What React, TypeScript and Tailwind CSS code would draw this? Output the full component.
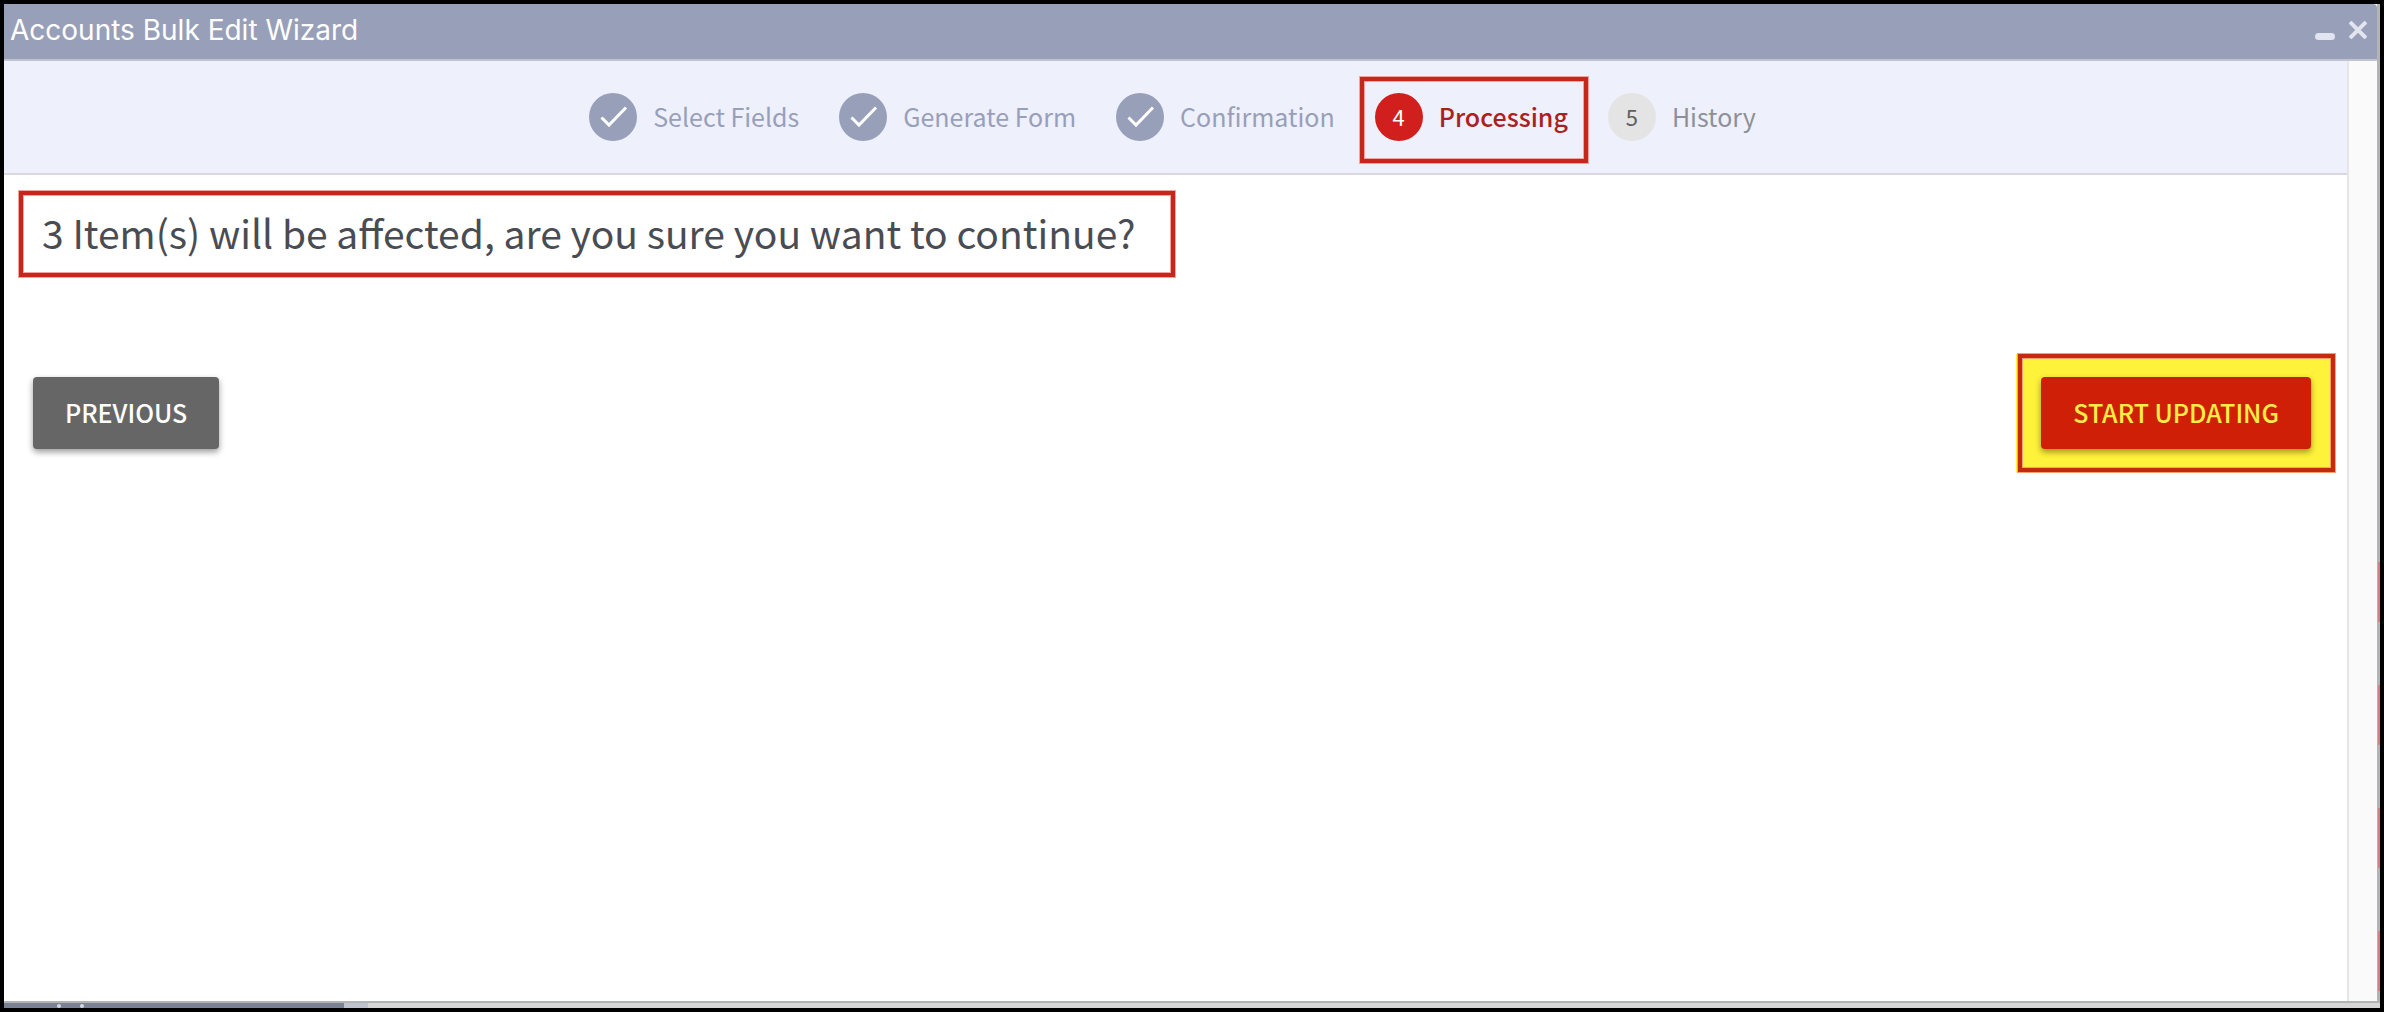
const steps = [
  { label: "Select Fields", state: "done" },
  { label: "Generate Form", state: "done" },
  { label: "Confirmation", state: "done" },
  { label: "Processing", state: "current" },
  { label: "History", state: "todo" },
];

const labelStyle: Record<string, string> = {
  done: "text-[#989fb9]",
  current: "font-medium text-[#ab1f22]",
  todo: "text-[#8e9099]",
};

const circleStyle: Record<string, string> = {
  done: "bg-[#989fb9] text-white",
  current: "bg-[#d01f1c] text-white",
  todo: "bg-[#e4e4e4] text-[#5f5f5f]",
};

function Check() {
  return (
    <svg viewBox="0 0 48 48" className="size-12" fill="none" stroke="white" strokeWidth="3" aria-label="Completed">
      <path d="M12.5 25.5l7.5 7.5L37 15.5" />
    </svg>
  );
}

function Highlight({ className }: { className: string }) {
  return (
    <span
      aria-hidden="true"
      className={`pointer-events-none absolute border-4 border-[#c5271c] shadow-[inset_0_0_0_1px_#f3a39c] outline outline-[#f3a39c] ${className}`}
    />
  );
}

function TitleBar() {
  return (
    <header className="flex h-[57px] items-center justify-between rounded-tr border-b-2 border-[#c0c4d1] bg-[#989fb9] pl-[6px] pr-[10px] pb-1">
      <h1 className="font-[Inter,sans-serif] text-[28px] leading-[50px] text-white">Accounts Bulk Edit Wizard</h1>
      <div className="flex items-center gap-[14px] text-[#e2e4f0]">
        <button aria-label="Minimize" className="flex h-5 w-5 items-end">
          <span className="h-[7px] w-5 rounded-full bg-current" />
        </button>
        <button aria-label="Close" className="size-[18px]">
          <svg viewBox="0 0 18 18" className="size-[18px]" stroke="currentColor" strokeWidth="4">
            <path d="M1 1l16 16M17 1L1 17" />
          </svg>
        </button>
      </div>
    </header>
  );
}

function Stepper() {
  return (
    <ol className="flex h-[114px] items-center justify-center gap-10 border-b-2 border-[#d7d8e1] bg-[#eef0fc] pr-[6px]">
      {steps.map((step, i) => (
        <li
          key={step.label}
          aria-current={step.state === "current" ? "step" : undefined}
          className="relative flex items-center gap-4 text-[25px] leading-8"
        >
          <span className={`flex size-12 shrink-0 items-center justify-center rounded-full pb-[2px] text-[22px] leading-6 ${circleStyle[step.state]}`}>
            {step.state === "done" ? <Check /> : <span>{i + 1}</span>}
          </span>
          <span className={`pb-[2px] ${labelStyle[step.state]}`}>{step.label}</span>
          {step.state === "current" && <Highlight className="-top-4 -bottom-[22px] -left-[15px] -right-[20px]" />}
        </li>
      ))}
    </ol>
  );
}

export default function App() {
  return (
    <div className="flex min-h-screen flex-col border-4 border-black bg-[#b4b8b8] font-['Noto_Sans_CJK_SC',sans-serif]">
      <div className="flex flex-1">
        <section className="flex min-w-0 flex-1 flex-col bg-white">
          <TitleBar />
          <div className="flex flex-1">
            <main className="flex min-w-0 flex-1 flex-col">
              <Stepper />
              <div className="pl-[15px]">
                <p className="relative mt-4 flex h-[86px] w-fit items-center pl-[23px] pr-10 pb-1 text-[39px] leading-[60px] text-[#4a4c54]">
                  3 Item(s) will be affected, are you sure you want to continue?
                  <Highlight className="inset-0" />
                </p>
              </div>
              <div className="mt-[77px] flex items-center justify-between pl-[29px] pr-3">
                <button className="h-[72px] rounded bg-[#666] px-8 pb-[2px] text-[25px] leading-8 font-medium text-white shadow-[0_3px_6px_rgba(0,0,0,0.4)]">
                  PREVIOUS
                </button>
                <div className="border-l-2 border-[#fff23a]">
                  <div className="border-4 border-[#c52a0c] bg-[#fff23a] px-5 py-[19px] pl-[19px] shadow-[inset_0_0_0_1px_#f8a070] outline outline-[#f8a070]">
                    <button className="h-[72px] rounded bg-[#cf2007] px-8 pb-[2px] text-[25px] leading-8 font-medium text-[#ffec45] shadow-[0_3px_6px_rgba(0,0,0,0.4)]">
                      START UPDATING
                    </button>
                  </div>
                </div>
              </div>
            </main>
            <div className="w-[30px] border-l-2 border-[#e6e6e6] bg-[#fafafa]" />
          </div>
        </section>
        <div className="flex w-[3px] flex-col bg-[#b2b4b7] pt-[558px] pb-2 pl-px">
          <div className="flex flex-1 flex-col gap-[63px]">
            <span className="h-[60px] bg-[#d47f7f]" />
            <span className="h-[60px] bg-[#d47f7f]" />
            <span className="h-[60px] bg-[#d47f7f]" />
            <span className="h-[60px] bg-[#d47f7f]" />
          </div>
        </div>
      </div>
      <div className="flex h-[7px] border-t-2 border-[#b0b4b3] bg-[#d5d6d5]">
        <div className="flex w-[340px] items-center gap-[19px] bg-[#7b8296] pl-[53px]">
          <span className="size-1 rounded-full bg-[#d5d9e4]" />
          <span className="size-1 rounded-full bg-[#d5d9e4]" />
        </div>
        <div className="w-6 bg-[#bfc3d0]" />
      </div>
    </div>
  );
}
